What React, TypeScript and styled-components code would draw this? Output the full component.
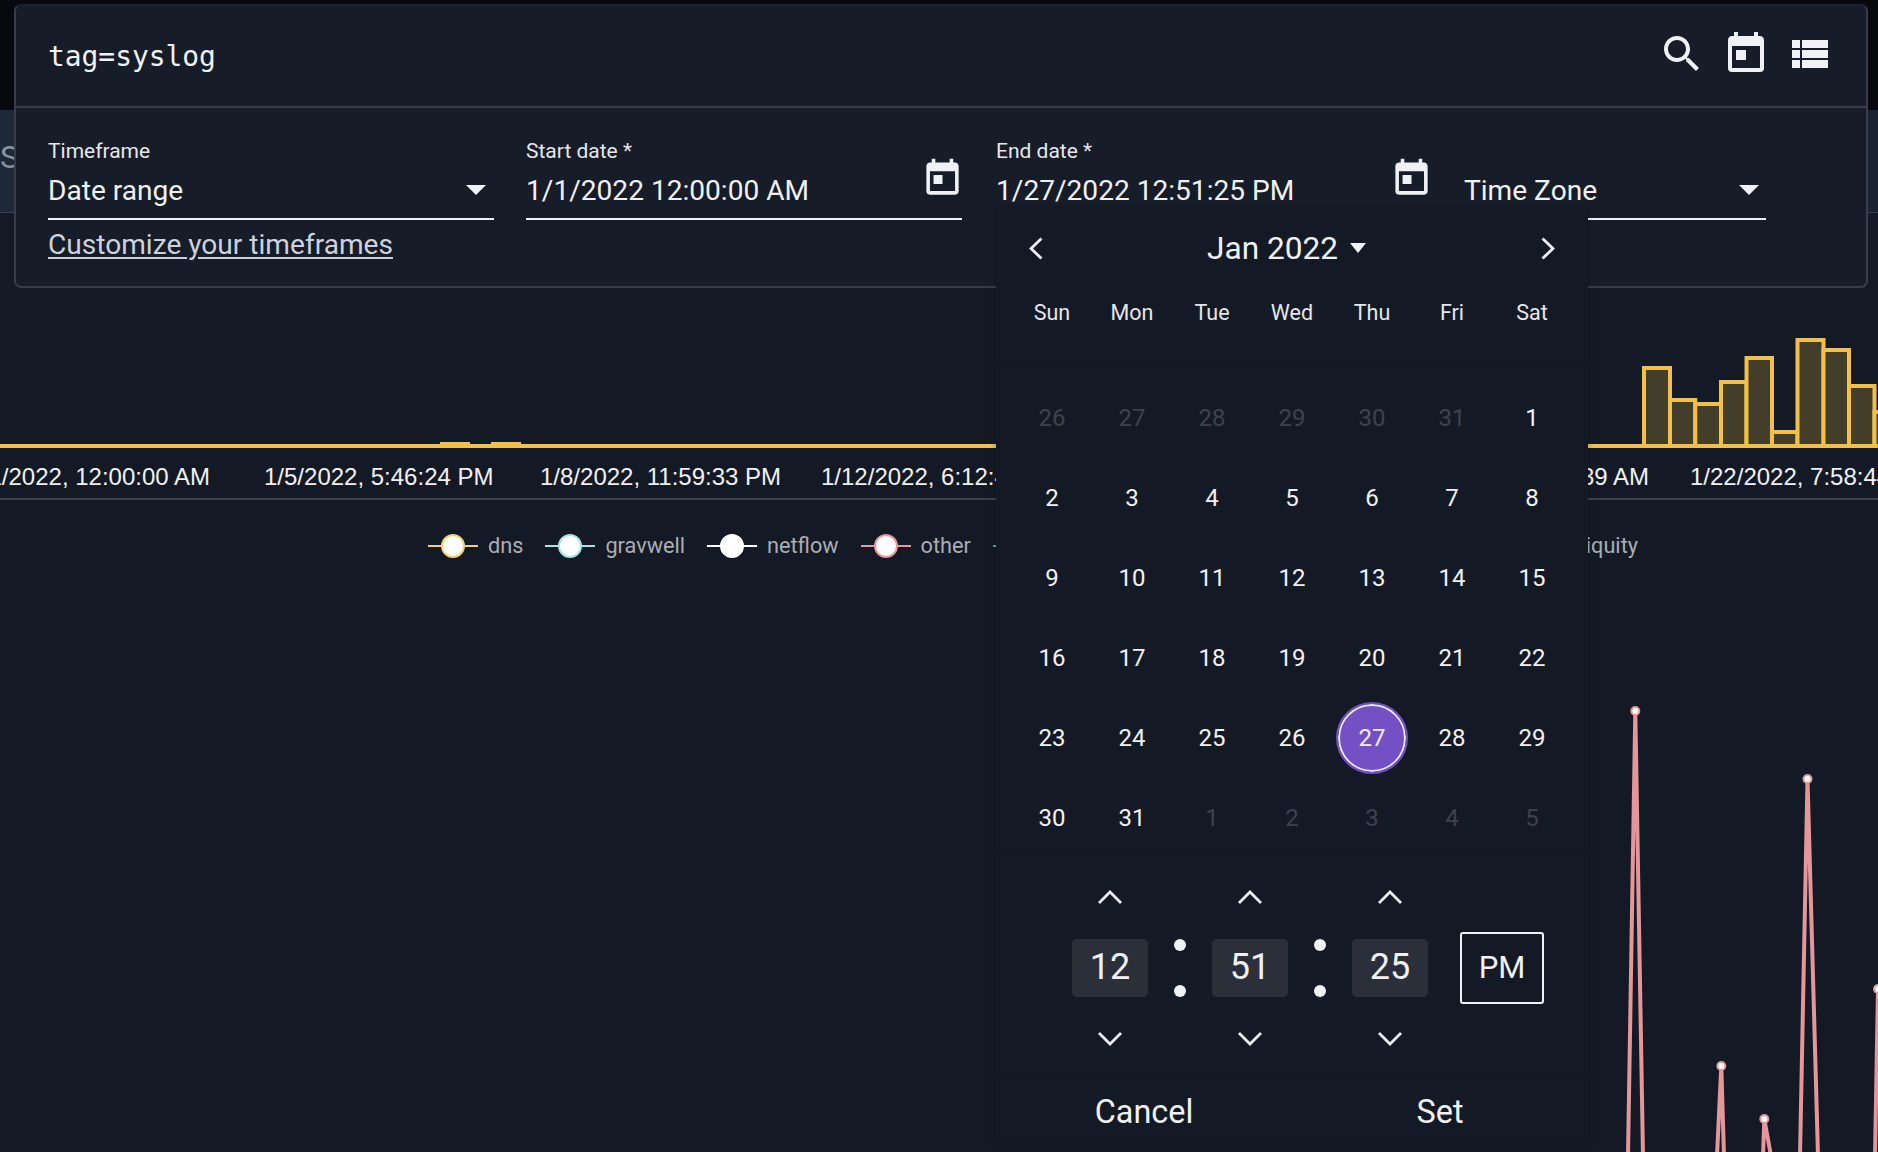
import React from "react";
import styled, { createGlobalStyle } from "styled-components";

const GlobalStyle = createGlobalStyle`
  html, body { margin: 0; padding: 0; background: #141a25; }
  body { font-family: Roboto, "Noto Sans", sans-serif; color: #f0f1f4; }
`;

const Page = styled.div`
  position: relative;
  width: 1878px;
  height: 1152px;
  overflow: hidden;
  background: #141a25;
  display: flex;
  flex-direction: column;
`;
const Masthead = styled.div`
  height: 110px;
  background: #07090d;
`;
const Toolbar = styled.div`
  height: 102px;
  box-sizing: content-box;
  background: linear-gradient(90deg, #1d2838, #1a2331);
  border-bottom: 1px solid #3a4150;
  display: flex;
  align-items: center;
  padding-bottom: 0;
  font-size: 32px;
  line-height: 94px;
  color: #8c93a0;
`;
const ToolbarTitle = styled.span`
  display: block;
  height: 94px;
  align-self: flex-start;
`;
const Chart = styled.svg`
  display: block;
  flex: none;
`;
const Legend = styled.div`
  height: 92px;
  display: flex;
  align-items: center;
  justify-content: space-between;
  padding: 0 240px 0 428px;
  box-sizing: border-box;
`;
const LegendGroup = styled.div`
  display: flex;
  align-items: center;
  gap: 22px;
`;
const LegendItem = styled.div`
  display: flex;
  align-items: center;
  gap: 10px;
  font-size: 21.7px;
  line-height: 28px;
  color: #abadb3;
`;
const SearchPanel = styled.div`
  position: absolute;
  left: 14px;
  top: 4px;
  width: 1854px;
  height: 284px;
  box-sizing: border-box;
  background: #161c28;
  border: 2px solid #383d49;
  border-top-color: #1c222e;
  border-radius: 7px;
`;
const QueryBar = styled.div`
  height: 100px;
  display: flex;
  align-items: center;
  justify-content: space-between;
  padding: 0 32px;
  border-bottom: 2px solid #383d49;
`;
const QueryText = styled.div`
  font-family: "DejaVu Sans Mono", "Liberation Mono", monospace;
  font-size: 27.9px;
  color: #f0f1f4;
`;
const IconRow = styled.div`
  display: flex;
  gap: 16px;
  margin-top: -4px;
`;
const Icon = styled.svg`
  display: block;
  fill: #f0f1f4;
`;
const FilterArea = styled.div`
  padding: 30px 32px 0;
`;
const FieldRow = styled.div`
  display: flex;
`;
const Field = styled.div<{ $w: number; $ml: number }>`
  position: relative;
  width: ${(p) => p.$w}px;
  margin-left: ${(p) => p.$ml}px;
  height: 80px;
  border-bottom: 2px solid #f0f1f4;
`;
const FieldLabel = styled.div`
  font-size: 21px;
  line-height: 26px;
  color: #e6e7ea;
`;
const FieldValue = styled.div`
  display: flex;
  align-items: center;
  justify-content: space-between;
  height: 52px;
  font-size: 28.1px;
  color: #f0f1f4;
`;
const FieldIcon = styled(Icon)`
  position: absolute;
  right: -2px;
  top: 19px;
`;
const Caret = styled.svg`
  display: block;
  fill: #f0f1f4;
`;
const SelectCaret = styled(Caret)<{ $mr: number }>`
  margin-right: ${(p) => p.$mr}px;
`;
const TimeZoneValue = styled(FieldValue)`
  padding-top: 26px;
`;
const CustomizeLink = styled.a`
  display: block;
  margin-top: 10px;
  font-size: 28.1px;
  line-height: 30px;
  color: #cdd2de;
  text-decoration: underline;
  text-underline-offset: 3px;
`;
const Popover = styled.div`
  position: absolute;
  left: 996px;
  top: 207px;
  width: 592px;
  height: 936px;
  background: #141a25;
  box-shadow: 0 2px 6px rgba(0, 0, 0, 0.22);
  display: flex;
  flex-direction: column;
`;
const MonthRow = styled.div`
  height: 82px;
  display: flex;
  align-items: center;
  justify-content: space-between;
  padding: 0 33px;
`;
const MonthLabel = styled.div`
  display: flex;
  align-items: center;
  gap: 12px;
  font-size: 31.6px;
  padding-right: 11px;
`;
const Line = styled.svg`
  display: block;
  fill: none;
  stroke: #f0f1f4;
  stroke-width: 2.8;
`;
const Weekdays = styled.div`
  display: grid;
  grid-template-columns: repeat(7, 72px);
  column-gap: 8px;
  padding: 0 20px 26px;
  height: 46px;
  align-items: center;
  border-bottom: 1px solid #10151e;
`;
const Weekday = styled.div`
  text-align: center;
  font-size: 21.5px;
  color: #e6e7ea;
`;
const Days = styled.div`
  display: grid;
  grid-template-columns: repeat(7, 72px);
  grid-auto-rows: 72px;
  gap: 8px;
  padding: 20px 20px 0;
  border-bottom: 1px solid #10151e;
`;
const Day = styled.div<{ $muted?: boolean; $selected?: boolean }>`
  display: flex;
  align-items: center;
  justify-content: center;
  font-size: 24px;
  border-radius: 50%;
  box-sizing: border-box;
  color: ${(p) => (p.$muted ? "#3e424c" : "#f0f1f4")};
  ${(p) =>
    p.$selected
      ? `background: #7350c4; border: 2px solid #ebe7f6; outline: 2px solid #7350c4; outline-offset: 0; margin: 2px; color: #f0ecfa;`
      : ""}
`;
const TimeRow = styled.div`
  flex: none;
  height: 224px;
  box-sizing: border-box;
  display: flex;
  align-items: center;
  padding: 2px 0 0 76px;
  border-bottom: 1px solid #10151e;
`;
const Spinner = styled.div`
  width: 76px;
  display: flex;
  flex-direction: column;
  align-items: center;
  gap: 35px;
`;
const TimeBox = styled.div`
  width: 76px;
  height: 58px;
  box-sizing: border-box;
  padding-bottom: 2px;
  border-radius: 5px;
  background: #2b2f3a;
  display: flex;
  align-items: center;
  justify-content: center;
  font-size: 36px;
  color: #f0f1f4;
`;
const Colon = styled.div`
  width: 64px;
  height: 58px;
  display: flex;
  flex-direction: column;
  align-items: center;
  justify-content: space-between;
`;
const Dot = styled.div`
  width: 12px;
  height: 12px;
  border-radius: 50%;
  background: #f0f1f4;
`;
const PmButton = styled.div`
  width: 84px;
  height: 72px;
  box-sizing: border-box;
  margin-left: 32px;
  border: 2px solid #f0f1f4;
  border-radius: 3px;
  display: flex;
  align-items: center;
  justify-content: center;
  font-size: 31px;
  color: #f0f1f4;
`;
const Footer = styled.div`
  flex: 1;
  display: grid;
  grid-template-columns: 1fr 1fr;
  padding-top: 2px;
`;
const FooterButton = styled.div`
  display: flex;
  align-items: center;
  justify-content: center;
  font-size: 32.4px;
  color: #f0f1f4;
`;

const SEARCH = "M15.5 14h-.79l-.28-.27C15.41 12.59 16 11.11 16 9.5 16 5.91 13.09 3 9.5 3S3 5.91 3 9.5 5.91 16 9.5 16c1.61 0 3.09-.59 4.23-1.57l.27.28v.79l5 4.99L20.49 19l-4.99-5zm-6 0C7.01 14 5 11.99 5 9.5S7.01 5 9.5 5 14 7.01 14 9.5 11.99 14 9.5 14z";
const CALENDAR = "M7,10H12V15H7M19,19H5V8H19M19,3H18V1H16V3H8V1H6V3H5C3.89,3 3,3.9 3,5V19A2,2 0 0,0 5,21H19A2,2 0 0,0 21,19V5C21,3.89 20.1,3 19,3Z";
const LIST = "M3 14h4v-4H3v4zm0 5h4v-4H3v4zM3 9h4V5H3v4zm5 5h13v-4H8v4zm0 5h13v-4H8v4zM8 5v4h13V5H8z";

const barEdges = [1644, 1670, 1695.3, 1721, 1746.5, 1772, 1797.5, 1823.5, 1849, 1874.5, 1900];
const barTops = [366, 398, 402, 380, 356, 430, 338, 348, 384, 410];

const axisLabels: [number, string, "start" | "end"][] = [
  [210, "1/1/2022, 12:00:00 AM", "end"],
  [264, "1/5/2022, 5:46:24 PM", "start"],
  [540, "1/8/2022, 11:59:33 PM", "start"],
  [821, "1/12/2022, 6:12:43 AM", "start"],
  [1649, "1/19/2022, 1:45:39 AM", "end"],
  [1690, "1/22/2022, 7:58:44 AM", "start"],
];

const spikes: [number, number, number, number][] = [
  [1635.3, 711, 1628, 1643],
  [1721.3, 1066, 1717, 1724],
  [1764.3, 1119, 1763, 1771],
  [1807.5, 779, 1800, 1818],
  [1878, 989, 1875, 1881],
];

const LegendMark = ({ color }: { color: string }) => (
  <svg width="50" height="24" viewBox="0 0 50 24">
    <line x1="0" y1="12" x2="50" y2="12" stroke={color} strokeWidth="2" />
    <circle cx="25" cy="12" r="11" fill="#fff" stroke={color} strokeWidth="2" />
  </svg>
);

const legendLeft: [string, string][] = [
  ["dns", "#f6cf6e"],
  ["gravwell", "#a6e6e2"],
  ["netflow", "#ffffff"],
  ["other", "#e7979a"],
  ["sshd", "#3fb984"],
];
const legendRight: [string, string][] = [["ubiquity", "#9a8be0"]];

const weekdays = ["Sun", "Mon", "Tue", "Wed", "Thu", "Fri", "Sat"];
const days: [number, boolean][] = [
  ...[26, 27, 28, 29, 30, 31].map((d): [number, boolean] => [d, true]),
  ...Array.from({ length: 31 }, (_, i): [number, boolean] => [i + 1, false]),
  ...[1, 2, 3, 4, 5].map((d): [number, boolean] => [d, true]),
];

const Up = () => (
  <Line width="24" height="14" viewBox="0 0 24 14">
    <polyline points="1,13 12,2 23,13" />
  </Line>
);
const Down = () => (
  <Line width="24" height="14" viewBox="0 0 24 14">
    <polyline points="1,1 12,12 23,1" />
  </Line>
);

const TimeSpinner = ({ value }: { value: string }) => (
  <Spinner>
    <Up />
    <TimeBox>{value}</TimeBox>
    <Down />
  </Spinner>
);

const TimeColon = () => (
  <Colon>
    <Dot />
    <Dot />
  </Colon>
);

export default function App() {
  return (
    <Page>
      <GlobalStyle />
      <Masthead />
      <Toolbar>
        <ToolbarTitle>S</ToolbarTitle>
      </Toolbar>
      <Chart width="1878" height="287" viewBox="0 213 1878 287">
        {barTops.map((top, i) => (
          <rect
            key={i}
            x={barEdges[i]}
            y={top + 2}
            width={barEdges[i + 1] - barEdges[i]}
            height={446 - top - 2}
            fill="#433e2a"
            stroke="#f2bf49"
            strokeWidth="4"
          />
        ))}
        <rect x="0" y="444" width="1878" height="4" fill="#f2bf49" />
        <rect x="440" y="442" width="30" height="3" fill="#f2bf49" />
        <rect x="491" y="442" width="30" height="3" fill="#f2bf49" />
        <rect x="0" y="498" width="1878" height="2" fill="#3c404b" />
        {axisLabels.map(([x, t, anchor]) => (
          <text
            key={t}
            x={x}
            y="485"
            textAnchor={anchor}
            fontFamily="'Liberation Sans', Arial, sans-serif"
            fontSize="24"
            fill="#f0f1f4"
          >
            {t}
          </text>
        ))}
      </Chart>
      <Legend>
        <LegendGroup>
          {legendLeft.map(([n, c]) => (
            <LegendItem key={n}>
              <LegendMark color={c} />
              {n}
            </LegendItem>
          ))}
        </LegendGroup>
        <LegendGroup>
          {legendRight.map(([n, c]) => (
            <LegendItem key={n}>
              <LegendMark color={c} />
              {n}
            </LegendItem>
          ))}
        </LegendGroup>
      </Legend>
      <Chart width="1878" height="560" viewBox="0 592 1878 560">
        {spikes.map(([x, y, l, r]) => (
          <g key={x}>
            <polyline
              points={`${l},1156 ${x},${y} ${r},1156`}
              fill="none"
              stroke="#e49699"
              strokeWidth="4"
            />
            <circle cx={x} cy={y} r="4" fill="#fff" stroke="#e49699" strokeWidth="2" />
          </g>
        ))}
      </Chart>

      <SearchPanel>
        <QueryBar>
          <QueryText>tag=syslog</QueryText>
          <IconRow>
            <Icon width="48" height="48" viewBox="0 0 24 24"><path d={SEARCH} /></Icon>
            <Icon width="48" height="48" viewBox="0 0 24 24"><path d={CALENDAR} /></Icon>
            <Icon width="48" height="48" viewBox="0 0 24 24"><path d={LIST} /></Icon>
          </IconRow>
        </QueryBar>
        <FilterArea>
          <FieldRow>
            <Field $w={446} $ml={0}>
              <FieldLabel>Timeframe</FieldLabel>
              <FieldValue>
                Date range
                <SelectCaret $mr={8} width="20" height="10" viewBox="7 10 10 5"><path d="M7 10l5 5 5-5z" /></SelectCaret>
              </FieldValue>
            </Field>
            <Field $w={436} $ml={32}>
              <FieldLabel>Start date *</FieldLabel>
              <FieldValue>1/1/2022 12:00:00 AM</FieldValue>
              <FieldIcon width="43" height="43" viewBox="0 0 24 24"><path d={CALENDAR} /></FieldIcon>
            </Field>
            <Field $w={435} $ml={34}>
              <FieldLabel>End date *</FieldLabel>
              <FieldValue>1/27/2022 12:51:25 PM</FieldValue>
              <FieldIcon width="43" height="43" viewBox="0 0 24 24"><path d={CALENDAR} /></FieldIcon>
            </Field>
            <Field $w={302} $ml={33}>
              <TimeZoneValue>
                Time Zone
                <SelectCaret $mr={7} width="20" height="10" viewBox="7 10 10 5"><path d="M7 10l5 5 5-5z" /></SelectCaret>
              </TimeZoneValue>
            </Field>
          </FieldRow>
          <CustomizeLink>Customize your timeframes</CustomizeLink>
        </FilterArea>
      </SearchPanel>

      <Popover>
        <MonthRow>
          <Line width="14" height="23" viewBox="0 0 14 23">
            <polyline points="12.5,1.5 2,11.5 12.5,21.5" />
          </Line>
          <MonthLabel>
            Jan 2022
            <Caret width="16" height="10" viewBox="0 0 16 10"><path d="M0 0h16L8 10z" /></Caret>
          </MonthLabel>
          <Line width="14" height="23" viewBox="0 0 14 23">
            <polyline points="1.5,1.5 12,11.5 1.5,21.5" />
          </Line>
        </MonthRow>
        <Weekdays>
          {weekdays.map((d) => (
            <Weekday key={d}>{d}</Weekday>
          ))}
        </Weekdays>
        <Days>
          {days.map(([d, muted], i) => (
            <Day key={i} $muted={muted} $selected={!muted && d === 27}>
              {d}
            </Day>
          ))}
        </Days>
        <TimeRow>
          <TimeSpinner value="12" />
          <TimeColon />
          <TimeSpinner value="51" />
          <TimeColon />
          <TimeSpinner value="25" />
          <PmButton>PM</PmButton>
        </TimeRow>
        <Footer>
          <FooterButton>Cancel</FooterButton>
          <FooterButton>Set</FooterButton>
        </Footer>
      </Popover>
    </Page>
  );
}
